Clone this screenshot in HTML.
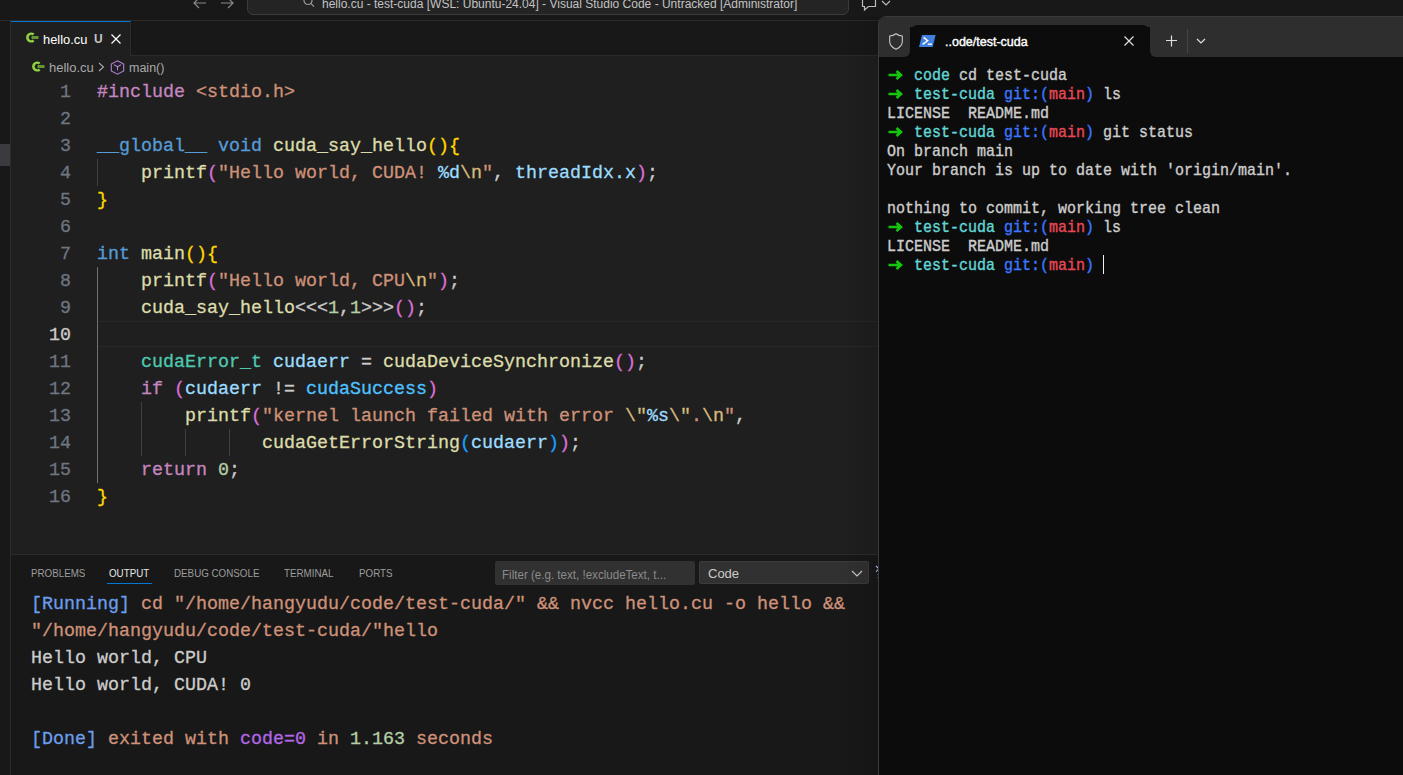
<!DOCTYPE html>
<html><head><meta charset="utf-8">
<style>
*{margin:0;padding:0;box-sizing:border-box}
html,body{width:1403px;height:775px;overflow:hidden;background:#181818;font-family:"Liberation Sans",sans-serif;position:relative}
.abs{position:absolute}
svg{position:absolute;overflow:visible}
#title{left:0;top:0;width:1403px;height:21px;background:#181818;border-bottom:1px solid #2b2b2b}
#search{left:247px;top:-12px;width:602px;height:27px;border:1px solid #3b3b3b;border-radius:6px;background:#242424}
#searchtxt{left:322px;top:-3px;font-size:12px;color:#c2c2c2;white-space:nowrap;letter-spacing:0px}
#leftstrip{left:0;top:21px;width:11px;height:754px;background:#181818;border-right:1px solid #2b2b2b}
#tabbar{left:11px;top:21px;width:868px;height:35px;background:#181818;border-bottom:1px solid #2b2b2b}
#tab{left:11px;top:21px;width:120px;height:35px;background:#1f1f1f;border-top:1px solid #0078d4;border-right:1px solid #2b2b2b}
#editor{left:11px;top:56px;width:868px;height:498px;background:#1f1f1f}
.code{font-family:"Liberation Mono",monospace;font-size:18.33px;line-height:27px;white-space:pre;-webkit-text-stroke:0.3px currentColor}
.ln{position:absolute;left:0;width:71px;text-align:right;color:#6e7681;padding-top:1px;height:27px}
.cl{position:absolute;left:97px;color:#cccccc;padding-top:1px;height:27px}
.ln.cur{color:#cccccc}
.guide{width:1px;background:#404040}
#panel{left:11px;top:554px;width:868px;height:221px;background:#181818;border-top:1px solid #2b2b2b}
.ptab{position:absolute;top:567px;font-size:11px;color:#9d9d9d;white-space:nowrap;transform:scaleX(0.89);transform-origin:0 0}
#term{left:878px;top:16px;width:540px;height:780px;background:#0c0c0c;border:1px solid #3a3a3a;border-top-left-radius:8px;overflow:hidden}
.tt{font-family:"Liberation Mono",monospace;font-size:15px;line-height:19px;white-space:pre;color:#cccccc;position:absolute;left:887px;-webkit-text-stroke:0.35px currentColor;transform:scaleY(1.08);transform-origin:0 14.5px}
.g{color:#16c60c}.c{color:#61d6d6}.bl{color:#3b78ff}.r{color:#e74856}
.kw{color:#c586c0}.st{color:#569cd6}.fn{color:#dcdcaa}.s{color:#ce9178}.esc{color:#d7ba7d}
.v{color:#9cdcfe}.ty{color:#4ec9b0}.cst{color:#4fc1ff}.n{color:#b5cea8}
.b1{color:#ffd700}.b2{color:#da70d6}.b3{color:#179fff}.fmt{color:#9cdcfe}
.out{font-family:"Liberation Mono",monospace;font-size:18.33px;line-height:27px;white-space:pre;position:absolute;left:31px;-webkit-text-stroke:0.3px currentColor;padding-top:4px;height:27px}
</style></head><body>
<div id="title" class="abs"></div>
<svg style="left:193px;top:-3px" width="14" height="12" viewBox="0 0 14 12"><path d="M13 6H1.5M6 1L1 6l5 5" stroke="#8a8a8a" stroke-width="1.2" fill="none"/></svg>
<svg style="left:220px;top:-3px" width="14" height="12" viewBox="0 0 14 12"><path d="M1 6h11.5M8 1l5 5-5 5" stroke="#8a8a8a" stroke-width="1.2" fill="none"/></svg>
<div id="search" class="abs"></div>
<svg style="left:303px;top:-4px" width="12" height="12" viewBox="0 0 12 12"><circle cx="5" cy="4.5" r="4" stroke="#9a9a9a" stroke-width="1.2" fill="none"/><path d="M7.9 7.4L11 10.6" stroke="#9a9a9a" stroke-width="1.3"/></svg>
<div id="searchtxt" class="abs">hello.cu - test-cuda [WSL: Ubuntu-24.04] - Visual Studio Code - Untracked [Administrator]</div>
<svg style="left:861px;top:-4px" width="16" height="16" viewBox="0 0 16 16"><path d="M1.5 1.5h13v9h-7l-4 3.5v-3.5h-2z" stroke="#bdbdbd" stroke-width="1.2" fill="none"/></svg>
<svg style="left:881px;top:0px" width="10" height="6" viewBox="0 0 10 6"><path d="M1 1l4 4 4-4" stroke="#bdbdbd" stroke-width="1.1" fill="none"/></svg>
<div id="leftstrip" class="abs"></div>
<div class="abs" style="left:0;top:144px;width:10px;height:22px;background:#3a3a3f"></div>
<div id="tabbar" class="abs"></div>
<div id="tab" class="abs"></div>
<svg style="left:26px;top:31px" width="14" height="14" viewBox="0 0 14 14"><path d="M7.64 3.59A3.8 3.8 0 1 0 7.64 9.41" stroke="#8fd13f" stroke-width="2.6" fill="none"/><rect x="5.5" y="5" width="7" height="3" fill="#7fbf3a" opacity="0.75"/></svg>
<div class="abs" style="left:43px;top:32px;font-size:13px;color:#ffffff;white-space:nowrap;transform:scaleX(0.99);transform-origin:0 0">hello.cu</div>
<div class="abs" style="left:94px;top:32px;font-size:12px;color:#c4c4c4;font-weight:bold">U</div>
<svg style="left:111px;top:34px" width="10" height="10" viewBox="0 0 10 10"><path d="M0.5 0.5l9 9M9.5 0.5l-9 9" stroke="#ffffff" stroke-width="1.2"/></svg>
<div id="editor" class="abs"></div>
<svg style="left:32px;top:60px" width="14" height="14" viewBox="0 0 14 14"><path d="M7.64 3.59A3.8 3.8 0 1 0 7.64 9.41" stroke="#8fd13f" stroke-width="2.6" fill="none"/><rect x="5.5" y="5" width="7" height="3" fill="#7fbf3a" opacity="0.75"/></svg>
<div class="abs" style="left:49px;top:60px;font-size:13px;color:#a9a9a9;white-space:nowrap">hello.cu</div>
<svg style="left:98px;top:62px" width="7" height="10" viewBox="0 0 7 10"><path d="M1 1l4.5 4L1 9" stroke="#a9a9a9" stroke-width="1.1" fill="none"/></svg>
<svg style="left:110px;top:60px" width="15" height="15" viewBox="0 0 15 15"><path d="M7.5 0.8l6.2 3.2v7l-6.2 3.2-6.2-3.2V4z" stroke="#b180d7" stroke-width="1.1" fill="none"/><path d="M3.8 4.6l3.7 2.2 3.7-2.2M7.5 6.8v3.6" stroke="#b180d7" stroke-width="1.1" fill="none"/></svg>
<div class="abs" style="left:129px;top:61px;font-size:12.5px;color:#a9a9a9;white-space:nowrap">main()</div>
<div class="abs" style="left:97px;top:321px;width:782px;height:26px;border-top:1px solid #282828;border-bottom:1px solid #282828"></div>
<div class="abs guide" style="left:97px;top:159px;height:27px"></div>
<div class="abs guide" style="left:97px;top:267px;height:216px;background:#6f6f6f"></div>
<div class="abs guide" style="left:141px;top:402px;height:54px"></div>
<div class="abs guide" style="left:185px;top:429px;height:27px"></div>
<div class="abs guide" style="left:229px;top:429px;height:27px"></div>
<div class="code ln" style="top:78px">1</div>
<div class="code cl" style="top:78px"><span class="kw">#include</span> <span class="s">&lt;stdio.h&gt;</span></div>
<div class="code ln" style="top:105px">2</div>
<div class="code ln" style="top:132px">3</div>
<div class="code cl" style="top:132px"><span class="st">__global__</span> <span class="st">void</span> <span class="fn">cuda_say_hello</span><span class="b1">(){</span></div>
<div class="code ln" style="top:159px">4</div>
<div class="code cl" style="top:159px">    <span class="fn">printf</span><span class="b2">(</span><span class="s">"Hello world, CUDA! </span><span class="fmt">%d</span><span class="esc">\n</span><span class="s">"</span>, <span class="v">threadIdx.x</span><span class="b2">)</span>;</div>
<div class="code ln" style="top:186px">5</div>
<div class="code cl" style="top:186px"><span class="b1">}</span></div>
<div class="code ln" style="top:213px">6</div>
<div class="code ln" style="top:240px">7</div>
<div class="code cl" style="top:240px"><span class="st">int</span> <span class="fn">main</span><span class="b1">(){</span></div>
<div class="code ln" style="top:267px">8</div>
<div class="code cl" style="top:267px">    <span class="fn">printf</span><span class="b2">(</span><span class="s">"Hello world, CPU</span><span class="esc">\n</span><span class="s">"</span><span class="b2">)</span>;</div>
<div class="code ln" style="top:294px">9</div>
<div class="code cl" style="top:294px">    <span class="fn">cuda_say_hello</span>&lt;&lt;&lt;<span class="n">1</span>,<span class="n">1</span>&gt;&gt;&gt;<span class="b2">()</span>;</div>
<div class="code ln cur" style="top:321px">10</div>
<div class="code ln" style="top:348px">11</div>
<div class="code cl" style="top:348px">    <span class="ty">cudaError_t</span> <span class="v">cudaerr</span> = <span class="fn">cudaDeviceSynchronize</span><span class="b2">()</span>;</div>
<div class="code ln" style="top:375px">12</div>
<div class="code cl" style="top:375px">    <span class="kw">if</span> <span class="b2">(</span><span class="v">cudaerr</span> != <span class="cst">cudaSuccess</span><span class="b2">)</span></div>
<div class="code ln" style="top:402px">13</div>
<div class="code cl" style="top:402px">        <span class="fn">printf</span><span class="b2">(</span><span class="s">"kernel launch failed with error </span><span class="esc">\"</span><span class="fmt">%s</span><span class="esc">\"</span><span class="s">.</span><span class="esc">\n</span><span class="s">"</span>,</div>
<div class="code ln" style="top:429px">14</div>
<div class="code cl" style="top:429px">               <span class="fn">cudaGetErrorString</span><span class="b3">(</span><span class="v">cudaerr</span><span class="b3">)</span><span class="b2">)</span>;</div>
<div class="code ln" style="top:456px">15</div>
<div class="code cl" style="top:456px">    <span class="kw">return</span> <span class="n">0</span>;</div>
<div class="code ln" style="top:483px">16</div>
<div class="code cl" style="top:483px"><span class="b1">}</span></div>
<div id="panel" class="abs"></div>
<div class="ptab" style="left:31px;color:#9d9d9d">PROBLEMS</div>
<div class="ptab" style="left:109px;color:#e7e7e7">OUTPUT</div>
<div class="ptab" style="left:174px;color:#9d9d9d">DEBUG CONSOLE</div>
<div class="ptab" style="left:284px;color:#9d9d9d">TERMINAL</div>
<div class="ptab" style="left:359px;color:#9d9d9d">PORTS</div>
<div class="abs" style="left:107px;top:583px;width:45px;height:1px;background:#0078d4"></div>
<div class="abs" style="left:495px;top:561px;width:200px;height:24px;background:#313131;border-radius:2px"></div>
<div class="abs" style="left:502px;top:568px;font-size:12px;color:#8b8b8b;white-space:nowrap;transform:scaleX(0.965);transform-origin:0 0">Filter (e.g. text, !excludeText, t...</div>
<div class="abs" style="left:699px;top:561px;width:170px;height:23px;background:#313131;border:1px solid #3c3c3c;border-radius:2px"></div>
<div class="abs" style="left:708px;top:566px;font-size:13px;color:#cccccc;white-space:nowrap">Code</div>
<svg style="left:851px;top:570px" width="12" height="7" viewBox="0 0 12 7"><path d="M1 1l5 5 5-5" stroke="#cccccc" stroke-width="1.2" fill="none"/></svg>
<div class="out" style="top:587px"><span style="color:#6b9eeb">[Running]</span><span class="s"> cd "/home/hangyudu/code/test-cuda/" &amp;&amp; nvcc hello.cu -o hello &amp;&amp;</span></div>
<div class="out" style="top:614px"><span class="s">"/home/hangyudu/code/test-cuda/"hello</span></div>
<div class="out" style="top:641px"><span style="color:#cccccc">Hello world, CPU</span></div>
<div class="out" style="top:668px"><span style="color:#cccccc">Hello world, CUDA! 0</span></div>
<div class="out" style="top:722px"><span style="color:#6b9eeb">[Done]</span><span class="s"> exited with </span><span style="color:#b267e6">code=0</span><span class="s"> in </span><span class="n">1.163</span><span class="s"> seconds</span></div>
<div class="abs" style="left:838px;top:16px;width:40px;height:759px;background:linear-gradient(to right,rgba(0,0,0,0),rgba(0,0,0,0.12))"></div>
<svg style="left:875px;top:565px" width="5" height="14" viewBox="0 0 5 14"><path d="M1 1l3 2.8L1 6.6" stroke="#9ab8e0" stroke-width="1.1" fill="none"/><rect x="2.5" y="9" width="1" height="1" fill="#6a80b0"/><rect x="2.5" y="12" width="1" height="1" fill="#6a80b0"/></svg>
<div id="term" class="abs"></div>
<div class="abs" style="left:879px;top:17px;width:524px;height:10px;background:#2e2e2e;border-top-left-radius:7px"></div>
<div class="abs" style="left:879px;top:20px;width:31px;height:37px;background:#2e2e2e;border-bottom-right-radius:6px"></div>
<div class="abs" style="left:1150px;top:20px;width:253px;height:37px;background:#2e2e2e;border-bottom-left-radius:6px"></div>
<div class="abs" style="left:910px;top:25px;width:240px;height:40px;background:#0c0c0c;border-radius:8px 8px 0 0"></div>
<svg style="left:889px;top:33px" width="14" height="17" viewBox="0 0 14 17"><path d="M7 0.7C5 2.2 3 2.9 0.7 3v5.5c0 3.6 2.6 6.1 6.3 7.8 3.7-1.7 6.3-4.2 6.3-7.8V3C11 2.9 9 2.2 7 0.7z" stroke="#c8c8c8" stroke-width="1.1" fill="none"/></svg>
<svg style="left:919px;top:35px" width="17" height="12" viewBox="0 0 17 12"><path d="M3 0h13.6l-3 12H0z" fill="#3f7fe0"/><path d="M4.6 2.4l4 3.4-5 3.6" stroke="#fff" stroke-width="1.5" fill="none"/><path d="M8.8 9.2h4.2" stroke="#fff" stroke-width="1.4"/></svg>
<div class="abs" style="left:945px;top:35px;font-size:12.5px;color:#ffffff;font-weight:normal;-webkit-text-stroke:0.4px #fff;white-space:nowrap">..ode/test-cuda</div>
<svg style="left:1123.5px;top:35.5px" width="10" height="10" viewBox="0 0 10 10"><path d="M0.5 0.5l9 9M9.5 0.5l-9 9" stroke="#e0e0e0" stroke-width="1.2"/></svg>
<svg style="left:1165px;top:35px" width="12" height="12" viewBox="0 0 12 12"><path d="M6.5 0.5v11M1 5.5h11" stroke="#e0e0e0" stroke-width="1.2"/></svg>
<div class="abs" style="left:1187px;top:29px;width:1px;height:24px;background:#454545"></div>
<svg style="left:1196px;top:38px" width="10" height="6" viewBox="0 0 10 6"><path d="M1 1l4 4 4-4" stroke="#e0e0e0" stroke-width="1.2" fill="none"/></svg>
<svg style="left:888px;top:70px" width="15" height="10" viewBox="0 0 15 10"><path d="M0.5 5H12.5M8.5 1l4.5 4-4.5 4" stroke="#16c60c" stroke-width="2.6" fill="none"/></svg>
<div class="tt" style="top:67px">   <span class="c">code</span> cd test-cuda</div>
<svg style="left:888px;top:89px" width="15" height="10" viewBox="0 0 15 10"><path d="M0.5 5H12.5M8.5 1l4.5 4-4.5 4" stroke="#16c60c" stroke-width="2.6" fill="none"/></svg>
<div class="tt" style="top:86px">   <span class="c">test-cuda</span> <span class="bl">git:(</span><span class="r">main</span><span class="bl">)</span> ls</div>
<div class="tt" style="top:105px">LICENSE  README.md</div>
<svg style="left:888px;top:127px" width="15" height="10" viewBox="0 0 15 10"><path d="M0.5 5H12.5M8.5 1l4.5 4-4.5 4" stroke="#16c60c" stroke-width="2.6" fill="none"/></svg>
<div class="tt" style="top:124px">   <span class="c">test-cuda</span> <span class="bl">git:(</span><span class="r">main</span><span class="bl">)</span> git status</div>
<div class="tt" style="top:143px">On branch main</div>
<div class="tt" style="top:162px">Your branch is up to date with 'origin/main'.</div>
<div class="tt" style="top:200px">nothing to commit, working tree clean</div>
<svg style="left:888px;top:222px" width="15" height="10" viewBox="0 0 15 10"><path d="M0.5 5H12.5M8.5 1l4.5 4-4.5 4" stroke="#16c60c" stroke-width="2.6" fill="none"/></svg>
<div class="tt" style="top:219px">   <span class="c">test-cuda</span> <span class="bl">git:(</span><span class="r">main</span><span class="bl">)</span> ls</div>
<div class="tt" style="top:238px">LICENSE  README.md</div>
<svg style="left:888px;top:260px" width="15" height="10" viewBox="0 0 15 10"><path d="M0.5 5H12.5M8.5 1l4.5 4-4.5 4" stroke="#16c60c" stroke-width="2.6" fill="none"/></svg>
<div class="tt" style="top:257px">   <span class="c">test-cuda</span> <span class="bl">git:(</span><span class="r">main</span><span class="bl">)</span> </div>
<div class="abs" style="left:1103px;top:255px;width:1px;height:19px;background:#f0f0f0"></div>
</body></html>
